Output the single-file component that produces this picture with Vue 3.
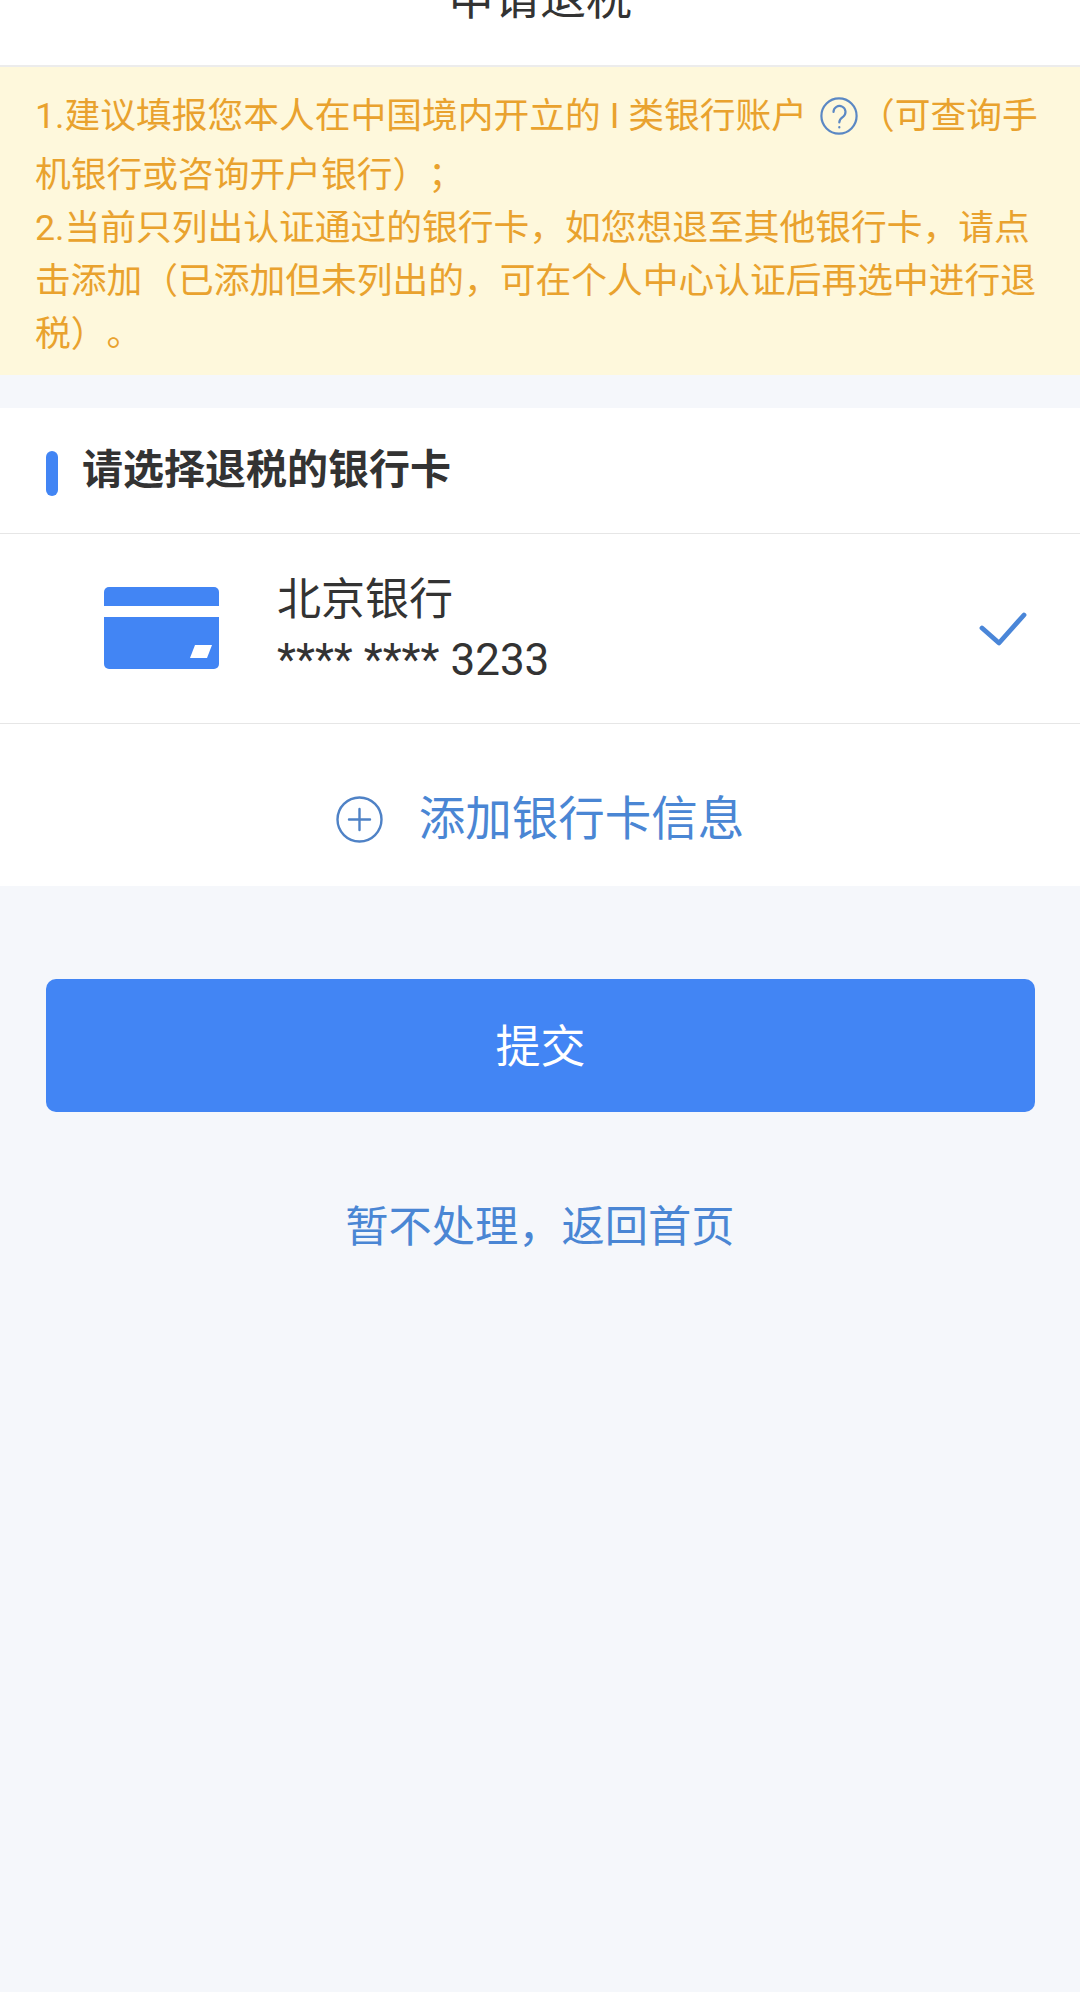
<script setup>
const noticeLead = '1.建议填报您本人在中国境内开立的 I 类银行账户'
const noticeTail = '（可查询手机银行或咨询开户银行）；'
const noticeSecond = '2.当前只列出认证通过的银行卡，如您想退至其他银行卡，请点击添加（已添加但未列出的，可在个人中心认证后再选中进行退税）。'
</script>

<template>
  <div class="page">
    <header class="topbar">
      <h1 class="topbar-title">申请退税</h1>
    </header>

    <section class="notice">
      <p class="notice-item">
        {{ noticeLead }}<svg class="help" width="38" height="38" viewBox="0 0 38 38" fill="none" stroke="#5b88c4" stroke-width="2.2" stroke-linecap="round">
          <circle cx="19" cy="19" r="17.6" />
          <path d="M13.5 15a6 6 0 1 1 9.6 4.8c-2.4 1.7-3.8 2.6-3.8 5.6" />
          <path d="M19.3 30v.4" />
        </svg>{{ noticeTail }}
      </p>
      <p class="notice-item">{{ noticeSecond }}</p>
    </section>

    <section class="panel">
      <div class="panel-head">
        <span class="panel-mark"></span>
        <h2 class="panel-title">请选择退税的银行卡</h2>
      </div>

      <div class="card-row">
        <svg class="card-icon" width="115" height="82" viewBox="0 0 115 82" fill="#4285f4">
          <path d="M0 19V5a5 5 0 0 1 5-5h105a5 5 0 0 1 5 5v14z" />
          <path d="M0 30h115v47a5 5 0 0 1-5 5H5a5 5 0 0 1-5-5z" />
          <path d="M91 58h17l-5 13H86z" fill="#fff" />
        </svg>
        <div class="card-text">
          <div class="card-line">北京银行</div>
          <div class="card-line">**** **** 3233</div>
        </div>
        <svg class="card-check" width="50" height="36" viewBox="0 0 50 36" fill="none" stroke="#4a86d8" stroke-width="4.8" stroke-linecap="round" stroke-linejoin="round">
          <path d="M4 16l17 15L46 3" />
        </svg>
      </div>

      <div class="add-row">
        <svg width="47" height="47" viewBox="0 0 47 47" fill="none" stroke="#4f82c6" stroke-width="2.4" stroke-linecap="round">
          <circle cx="23.5" cy="23.5" r="22" />
          <path d="M13 23.5h21M23.5 13v21" />
        </svg>
        <span class="add-label">添加银行卡信息</span>
      </div>
    </section>

    <button class="submit" type="button"><span class="submit-label">提交</span></button>
    <a class="back-link">暂不处理，返回首页</a>
  </div>
</template>

<style scoped>
.page {
  min-height: 1992px;
  background: #f5f7fb;
  font-family: Roboto, "Noto Sans CJK SC", sans-serif;
  text-spacing-trim: space-all;
  overflow: hidden;
}

.topbar {
  height: 65px;
  box-sizing: content-box;
  background: #fff;
  border-bottom: 2px solid #ececec;
  display: flex;
  justify-content: center;
  align-items: flex-end;
}

.topbar-title {
  margin: 0 0 37px;
  font-size: 46px;
  line-height: 60px;
  font-weight: 400;
  color: #333;
}

.notice {
  height: 308px;
  box-sizing: border-box;
  padding: 23px 35px 0;
  background: #fef8dc;
  color: #e9a22e;
  font-size: 35.75px;
}

.notice-item {
  margin: 0;
  line-height: 53px;
}

/* The deep bottom margin pushes the following line down a little. */
.help {
  display: inline-block;
  vertical-align: -21px;
  margin: 0 1px 14px 13px;
}

.panel {
  margin-top: 33px;
  background: #fff;
}

.panel-head {
  height: 126px;
  box-sizing: border-box;
  padding-left: 46px;
  display: flex;
  align-items: center;
  gap: 24px;
  border-bottom: 1px solid #e6e6e6;
}

.panel-mark {
  width: 12px;
  height: 45px;
  margin-top: 6px;
  border-radius: 6px;
  background: #4285f4;
}

.panel-title {
  margin: -2px 0 0;
  font-size: 41px;
  line-height: 60px;
  font-weight: 700;
  color: #333;
}

.card-row {
  height: 190px;
  box-sizing: border-box;
  padding: 0 52px 0 104px;
  display: flex;
  align-items: center;
  border-bottom: 1px solid #e6e6e6;
}

.card-icon {
  flex: none;
  margin-top: -2px;
}

.card-text {
  flex: 1;
  margin: 3px 0 0 58px;
  color: #333;
  font-size: 44px;
  line-height: 60px;
}

.card-check {
  flex: none;
  margin-bottom: -2px;
}

.add-row {
  height: 162px;
  box-sizing: border-box;
  padding-top: 28px;
  display: flex;
  justify-content: center;
  align-items: center;
  gap: 36px;
}

.add-label {
  font-size: 46.5px;
  line-height: 60px;
  color: #4a86d4;
}

.submit {
  display: block;
  width: 989px;
  height: 133px;
  margin: 93px 0 0 46px;
  padding: 0 0 4px;
  border: 0;
  border-radius: 10px;
  background: #4285f4;
  color: #fff;
  font: inherit;
  font-size: 45px;
}

.back-link {
  display: block;
  margin-top: 86px;
  text-align: center;
  font-size: 43.25px;
  line-height: 60px;
  color: #4a86d4;
}
</style>
